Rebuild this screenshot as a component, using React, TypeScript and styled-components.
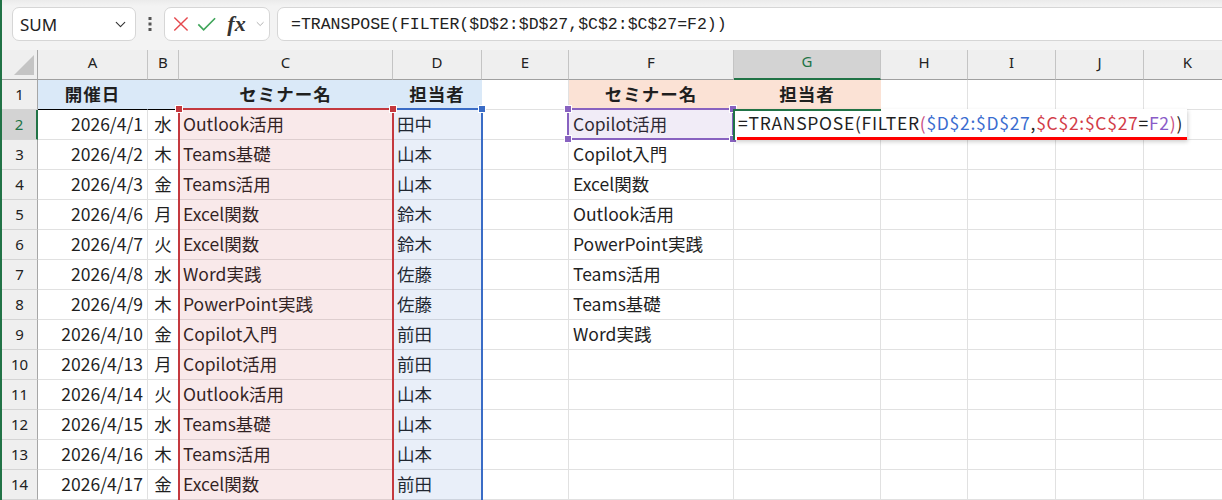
import styled, { createGlobalStyle } from "styled-components";
import { ChevronDown } from "lucide-react";

const GREEN = "#217346";
const GRID = "#e1e1e1";

const GlobalStyle = createGlobalStyle`
  html, body {
    margin: 0;
    padding: 0;
    background: #ffffff;
    overflow: hidden;
  }
  body {
    font-family: "Noto Sans CJK JP", "Noto Sans", sans-serif;
    color: #1f1f1f;
  }
`;

const Window = styled.div`
  width: 1222px;
  height: 500px;
  overflow: hidden;
  box-sizing: border-box;
  border-left: 2px solid ${GREEN};
  background: #ffffff;
`;

/* ---------- formula bar ---------- */

const Toolbar = styled.div`
  height: 50px;
  box-sizing: border-box;
  display: flex;
  align-items: flex-start;
  padding: 7px 0 0 10px;
  background: linear-gradient(#ebebeb 0, #f3f3f3 6px);
`;

const Box = styled.div`
  height: 34px;
  box-sizing: border-box;
  background: #ffffff;
  border: 1px solid #d6d6d6;
  border-radius: 7px;
  display: flex;
  align-items: center;
`;

const NameBox = styled(Box)`
  width: 124px;
  justify-content: space-between;
  padding: 0 6px 0 7px;
  font-family: "Noto Sans", sans-serif;
  font-size: 17px;
  color: #222;
`;

const Grip = styled.div`
  width: 28px;
  height: 34px;
  display: flex;
  align-items: center;
  justify-content: center;
`;

const FuncBox = styled(Box)`
  width: 106px;
  padding: 0 3px 0 8px;
  gap: 8px;
`;

const Fx = styled.span`
  font-family: "Liberation Serif", serif;
  font-style: italic;
  font-weight: 700;
  font-size: 22px;
  color: #333;
  margin-left: 3px;
  line-height: 1;
`;

const FormulaBox = styled(Box)`
  flex: 1;
  margin-left: 7px;
  margin-right: -12px;
  padding-left: 13px;
  font-family: "Liberation Mono", "DejaVu Sans Mono", monospace;
  font-size: 16.5px;
  color: #222;
  white-space: pre;
`;

/* ---------- sheet ---------- */

const COLS = [
  { key: "A", w: 110 },
  { key: "B", w: 31 },
  { key: "C", w: 214 },
  { key: "D", w: 89 },
  { key: "E", w: 87 },
  { key: "F", w: 165 },
  { key: "G", w: 147 },
  { key: "H", w: 87 },
  { key: "I", w: 88 },
  { key: "J", w: 88 },
  { key: "K", w: 88 },
];

const TEMPLATE = `36px ${COLS.map((c) => `${c.w}px`).join(" ")}`;

const Stack = styled.div`
  display: grid;
`;

const Sheet = styled.div`
  grid-area: 1 / 1;
  display: grid;
  grid-template-columns: ${TEMPLATE};
  grid-auto-rows: 30px;
`;

const Layer = styled.div`
  grid-area: 1 / 1;
  display: grid;
  grid-template-columns: ${TEMPLATE};
  grid-template-rows: repeat(15, 30px);
  pointer-events: none;
  z-index: 1;
`;

const Corner = styled.div`
  position: relative;
  background: #efefef;
  border-right: 1px solid #a6a6a6;
  border-bottom: 1px solid #a0a0a0;

  &::after {
    content: "";
    position: absolute;
    right: 3px;
    bottom: 4px;
    width: 0;
    height: 0;
    border-left: 20px solid transparent;
    border-bottom: 20px solid #c4c4c4;
  }
`;

const ColHead = styled.div<{ $active?: boolean }>`
  box-sizing: border-box;
  display: flex;
  align-items: center;
  justify-content: center;
  padding-bottom: 6px;
  font-family: "Noto Sans", sans-serif;
  font-size: 15px;
  background: ${(p) => (p.$active ? "#d3d3d3" : "#efefef")};
  color: ${(p) => (p.$active ? GREEN : "#222")};
  border-right: 1px solid #c4c4c4;
  border-bottom: ${(p) => (p.$active ? `2px solid ${GREEN}` : "1px solid #a0a0a0")};
`;

const RowHead = styled.div<{ $active?: boolean }>`
  box-sizing: border-box;
  display: flex;
  align-items: center;
  justify-content: center;
  padding-bottom: 1px;
  font-family: "Noto Sans", sans-serif;
  font-size: 15px;
  background: ${(p) => (p.$active ? "#d3d3d3" : "#efefef")};
  color: ${(p) => (p.$active ? GREEN : "#222")};
  border-right: ${(p) => (p.$active ? `2px solid ${GREEN}` : "1px solid #a6a6a6")};
  border-bottom: 1px solid #d4d4d4;
`;

const Cell = styled.div<{
  $align?: "left" | "center" | "right";
  $fill?: string;
  $bold?: boolean;
  $rule?: string;
}>`
  box-sizing: border-box;
  display: flex;
  align-items: center;
  overflow: visible;
  white-space: nowrap;
  padding: 0 4px 2px;
  font-size: 17.5px;
  font-weight: ${(p) => (p.$bold ? 700 : 400)};
  justify-content: ${(p) =>
    p.$align === "right" ? "flex-end" : p.$align === "center" ? "center" : "flex-start"};
  background: ${(p) => p.$fill || "#ffffff"};
  border-right: 1px solid ${(p) => p.$fill || GRID};
  border-bottom: 1px solid ${(p) => p.$rule || p.$fill || GRID};
  letter-spacing: ${(p) => (p.$bold ? "0.06em" : "0")};
`;

/* ---------- overlays on the sheet ---------- */

const Range = styled.div<{
  $col: number;
  $color: string;
  $tint: string;
  $sides: string;
}>`
  position: relative;
  grid-column: ${(p) => p.$col};
  grid-row: 3 / 16;
  margin: -2px -1px 0 ${(p) => (p.$sides.includes("l") ? "-1px" : "0")};
  background: ${(p) => p.$tint};
  border-style: solid;
  border-color: ${(p) => p.$color};
  border-width: 2px ${(p) => (p.$sides.includes("r") ? "2px" : "0")} 0
    ${(p) => (p.$sides.includes("l") ? "2px" : "0")};
`;

const SingleRange = styled.div<{ $color: string; $tint: string }>`
  position: relative;
  grid-column: 7;
  grid-row: 3;
  margin: -2px 0 0 -2px;
  background: ${(p) => p.$tint};
  border: 2px solid ${(p) => p.$color};
`;

const Handle = styled.span<{ $color: string; $x: "l" | "r"; $y: "t" | "b" }>`
  position: absolute;
  width: 6px;
  height: 6px;
  background: ${(p) => p.$color};
  outline: 1px solid #ffffff;
  ${(p) => (p.$x === "l" ? "left: -4px;" : "right: -4px;")}
  ${(p) => (p.$y === "t" ? "top: -4px;" : "bottom: -4px;")}
`;

const Editor = styled.div`
  position: relative;
  grid-column: 8;
  grid-row: 3;
  justify-self: start;
  width: 453px;
  margin: -1px 0 0 0;
  box-sizing: border-box;
  background: #ffffff;
  box-shadow: 1px 2px 4px rgba(0, 0, 0, 0.18);
  display: flex;
  align-items: center;
  padding: 0 0 4px 4px;
  font-size: 17.5px;
  letter-spacing: 0.72px;
  white-space: nowrap;
  color: #1f1f1f;

  &::after {
    content: "";
    position: absolute;
    left: 3px;
    right: 0;
    bottom: 0;
    height: 3px;
    background: #ff0000;
  }
`;

const ActiveCell = styled.div`
  grid-column: 8;
  grid-row: 3;
  margin: -1px 0 0 -1px;
  border-top: 2px solid ${GREEN};
  border-left: 2px solid ${GREEN};
  z-index: 2;
`;

const Tok = styled.span<{ $c?: string }>`
  color: ${(p) => p.$c || "#1f1f1f"};
`;

type Row = [string, string, string, string, string?];

const ROWS: Row[] = [
  ["2026/4/1", "水", "Outlook活用", "田中", "Copilot活用"],
  ["2026/4/2", "木", "Teams基礎", "山本", "Copilot入門"],
  ["2026/4/3", "金", "Teams活用", "山本", "Excel関数"],
  ["2026/4/6", "月", "Excel関数", "鈴木", "Outlook活用"],
  ["2026/4/7", "火", "Excel関数", "鈴木", "PowerPoint実践"],
  ["2026/4/8", "水", "Word実践", "佐藤", "Teams活用"],
  ["2026/4/9", "木", "PowerPoint実践", "佐藤", "Teams基礎"],
  ["2026/4/10", "金", "Copilot入門", "前田", "Word実践"],
  ["2026/4/13", "月", "Copilot活用", "前田"],
  ["2026/4/14", "火", "Outlook活用", "山本"],
  ["2026/4/15", "水", "Teams基礎", "山本"],
  ["2026/4/16", "木", "Teams活用", "山本"],
  ["2026/4/17", "金", "Excel関数", "前田"],
];

const BLUE_HEAD = "#dae9f8";
const PEACH = "#fbe2d5";
const RED = "#c4393f";
const BLUE = "#3a6cc6";
const PURPLE = "#8862c0";

export default function App() {
  const empty = (n: number, prefix: string) =>
    Array.from({ length: n }, (_, i) => <Cell key={`${prefix}${i}`} />);

  return (
    <>
      <GlobalStyle />
      <Window>
        <Toolbar>
          <NameBox>
            SUM
            <ChevronDown size={17} strokeWidth={1.6} color="#333" />
          </NameBox>
          <Grip>
            <svg width="4" height="16" viewBox="0 0 4 16">
              <rect x="0.5" y="1" width="3" height="3" fill="#555" />
              <rect x="0.5" y="6.5" width="3" height="3" fill="#555" />
              <rect x="0.5" y="12" width="3" height="3" fill="#555" />
            </svg>
          </Grip>
          <FuncBox>
            <svg width="18" height="18" viewBox="0 0 18 18">
              <path d="M1.5 1.5 L16.5 16.5 M16.5 1.5 L1.5 16.5" stroke="#e5484d" strokeWidth="1.6" />
            </svg>
            <svg width="22" height="18" viewBox="0 0 22 18">
              <path d="M1.5 9.5 L7.5 15.5 L20.5 2.5" stroke="#3fa55a" strokeWidth="1.9" fill="none" />
            </svg>
            <Fx>fx</Fx>
            <ChevronDown size={14} strokeWidth={1.5} color="#9a9a9a" />
          </FuncBox>
          <FormulaBox>=TRANSPOSE(FILTER($D$2:$D$27,$C$2:$C$27=F2))</FormulaBox>
        </Toolbar>

        <Stack>
          <Sheet>
            <Corner />
            {COLS.map((c) => (
              <ColHead key={c.key} $active={c.key === "G"}>
                {c.key}
              </ColHead>
            ))}

            <RowHead>1</RowHead>
            <Cell $align="center" $fill={BLUE_HEAD} $bold $rule="#000">
              開催日
            </Cell>
            <Cell $fill={BLUE_HEAD} $rule="#000" />
            <Cell $align="center" $fill={BLUE_HEAD} $bold $rule="#000">
              セミナー名
            </Cell>
            <Cell $align="center" $fill={BLUE_HEAD} $bold $rule="#000">
              担当者
            </Cell>
            <Cell />
            <Cell $align="center" $fill={PEACH} $bold>
              セミナー名
            </Cell>
            <Cell $align="center" $fill={PEACH} $bold>
              担当者
            </Cell>
            {empty(4, "r1")}

            {ROWS.map((r, i) => (
              <RowFragment key={i} n={i + 2} row={r} />
            ))}
          </Sheet>

          <Layer>
            <Range $col={5} $color={BLUE} $tint="rgba(58, 108, 198, 0.11)" $sides="r">
              <Handle $color={BLUE} $x="r" $y="t" />
            </Range>
            <Range $col={4} $color={RED} $tint="rgba(196, 57, 63, 0.11)" $sides="lr">
              <Handle $color={RED} $x="l" $y="t" />
              <Handle $color={RED} $x="r" $y="t" />
            </Range>
            <SingleRange $color={PURPLE} $tint="rgba(136, 98, 192, 0.12)">
              <Handle $color={PURPLE} $x="l" $y="t" />
              <Handle $color={PURPLE} $x="r" $y="t" />
              <Handle $color={PURPLE} $x="l" $y="b" />
              <Handle $color={PURPLE} $x="r" $y="b" />
            </SingleRange>
            <Editor>
              <Tok>=TRANSPOSE(FILTER</Tok>
              <Tok $c="#c94f84">(</Tok>
              <Tok $c="#3a6cd0">$D$2:$D$27</Tok>
              <Tok>,</Tok>
              <Tok $c="#d23b47">$C$2:$C$27</Tok>
              <Tok>=</Tok>
              <Tok $c="#8a5cc8">F2</Tok>
              <Tok $c="#c94f84">)</Tok>
              <Tok>)</Tok>
            </Editor>
            <ActiveCell />
          </Layer>
        </Stack>
      </Window>
    </>
  );
}

function RowFragment({ n, row }: { n: number; row: Row }) {
  const [date, day, seminar, owner, list] = row;
  return (
    <>
      <RowHead $active={n === 2}>{n}</RowHead>
      <Cell $align="right">{date}</Cell>
      <Cell $align="center">{day}</Cell>
      <Cell>{seminar}</Cell>
      <Cell>{owner}</Cell>
      <Cell />
      <Cell>{list ?? ""}</Cell>
      <Cell />
      <Cell />
      <Cell />
      <Cell />
      <Cell />
    </>
  );
}
